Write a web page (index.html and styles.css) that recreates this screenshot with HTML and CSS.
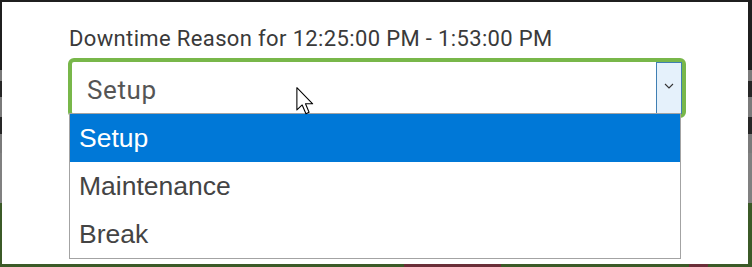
FILE: index.html
```html
<!DOCTYPE html>
<html lang="en">
<head>
<meta charset="utf-8">
<title>Downtime Reason</title>
<link rel="stylesheet" href="styles.css">
</head>
<body>
<div class="panel">
  <div class="label">Downtime Reason for 12:25:00 PM - 1:53:00 PM</div>
  <div class="select">
    <span class="select-value">Setup</span>
    <span class="select-button">
      <svg width="10" height="6" viewBox="0 0 10 6"><path d="M1 1 L5 5 L9 1" fill="none" stroke="#333" stroke-width="1.1"/></svg>
    </span>
  </div>
  <ul class="options">
    <li class="option selected">Setup</li>
    <li class="option">Maintenance</li>
    <li class="option">Break</li>
  </ul>
  <svg class="cursor" width="19" height="28" viewBox="0 0 13 19.5">
    <path d="M0.5 0.5 L0.5 16 L4.2 12.5 L6.8 18.6 L9 17.6 L6.5 11.7 L11.5 11.7 Z" fill="#fff" stroke="#000" stroke-width="0.75" stroke-linejoin="round"/>
  </svg>
</div>
</body>
</html>
```

FILE: styles.css
```css
html, body {
  margin: 0;
  padding: 0;
}

body {
  width: 752px;
  height: 267px;
  overflow: hidden;
  background:
    linear-gradient(to right, transparent 0 404px, #6a2e38 404px 501px, transparent 501px 689px, #6a2e38 689px 708px, transparent 708px) left bottom / 100% 3px no-repeat,
    linear-gradient(to bottom, #1f1f1f 0 70px, #7a7a7a 70px 81px, #262626 81px 97px, #7a7a7a 97px 117px, #262626 117px 134px, #7a7a7a 134px 153px, #808080 153px 203px, #3b5a27 203px);
}

.panel {
  position: relative;
  box-sizing: border-box;
  margin: 2px 4px 0 2px;
  height: 262px;
  background: #fff;
  padding: 24px 0 0 66px;
}

.label {
  font-family: Roboto, "Liberation Sans", sans-serif;
  font-size: 22px;
  line-height: 26px;
  letter-spacing: 0.36px;
  color: #3a3a3a;
  padding-left: 1px;
}

.select {
  box-sizing: border-box;
  margin-top: 6px;
  width: 618px;
  height: 60px;
  border: 4px solid #78b74a;
  border-radius: 6px;
  background: #fff;
  display: flex;
  align-items: stretch;
}

.select-value {
  flex: 1;
  display: flex;
  align-items: center;
  padding: 4px 0 0 15px;
  font-family: Roboto, "Liberation Sans", sans-serif;
  font-size: 26px;
  letter-spacing: 0.6px;
  color: #555;
}

.select-button {
  box-sizing: border-box;
  width: 26px;
  background: #e5f1fb;
  border: 1px solid #3f7fb3;
  display: flex;
  align-items: center;
  justify-content: center;
  padding-bottom: 4px;
}

.select-button svg {
  display: block;
}

.options {
  position: absolute;
  left: 67px;
  top: 111px;
  box-sizing: border-box;
  width: 612px;
  margin: 0;
  padding: 0;
  list-style: none;
  border: 1px solid #a3a3a3;
  background: #fff;
}

.option {
  height: 48px;
  display: flex;
  align-items: center;
  padding-left: 9px;
  font-family: "Liberation Sans", Arial, sans-serif;
  font-size: 26.5px;
  color: #444;
}

.option.selected {
  background: #0078d7;
  color: #fff;
}

.cursor {
  position: absolute;
  left: 294px;
  top: 85px;
}
```
